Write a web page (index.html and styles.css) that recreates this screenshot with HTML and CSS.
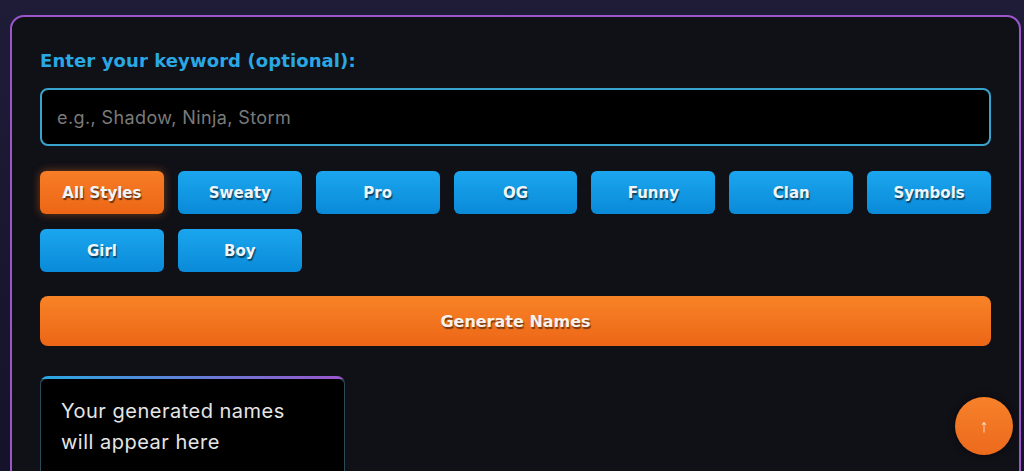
FILE: index.html
```html
<!DOCTYPE html>
<html lang="en">
<head>
  <meta charset="UTF-8">
  <title>Fortnite Name Generator</title>
  <link rel="stylesheet" href="styles.css">
</head>
<body>

  <div class="card">
    <label class="label" for="keyword">Enter your keyword (optional):</label>
    <input type="text" id="keyword" class="keyword" placeholder="e.g., Shadow, Ninja, Storm" />

    <div class="styles">
      <button class="style-btn active">All Styles</button>
      <button class="style-btn">Sweaty</button>
      <button class="style-btn">Pro</button>
      <button class="style-btn">OG</button>
      <button class="style-btn">Funny</button>
      <button class="style-btn">Clan</button>
      <button class="style-btn">Symbols</button>
      <button class="style-btn">Girl</button>
      <button class="style-btn">Boy</button>
    </div>

    <button class="generate">Generate Names</button>

    <div class="results">
      <p>Your generated names will appear here</p>
    </div>
  </div>

  <button class="to-top">&#8593;</button>

</body>
</html>
```
FILE: styles.css
```css
body {
  margin: 0;
  padding: 15px 3px 0 10px;
  background: linear-gradient(180deg, #1f1c38 0%, #151329 100%);
  font-family: Inter, "Noto Sans", sans-serif;
  height: 456px;
  overflow: hidden;
}
.card {
  background: #101017;
  border: 2px solid #9b56cc;
  border-radius: 14px;
  padding: 33px 28px 40px 28px;
  height: 500px;
  box-sizing: border-box;
}
.label {
  display: block;
  color: #2aa8e4;
  font-family: "DejaVu Sans", sans-serif;
  font-weight: bold;
  font-size: 18px;
  line-height: 22px;
  margin-bottom: 16px;
  letter-spacing: 0.1px;
}
.keyword {
  display: block;
  width: 100%;
  box-sizing: border-box;
  height: 58px;
  background: #000;
  border: 2px solid #3aa3cc;
  border-radius: 8px;
  padding: 0 15px;
  font-family: Inter, sans-serif;
  font-size: 18px;
  letter-spacing: 0.4px;
  color: #ddd;
  outline: none;
}
.keyword::placeholder {
  color: #7a7a7a;
}
.styles {
  display: grid;
  grid-template-columns: repeat(7, 1fr);
  column-gap: 14px;
  row-gap: 15px;
  margin-top: 25px;
}
.style-btn {
  height: 43px;
  border: none;
  border-radius: 6px;
  background: linear-gradient(180deg, #1ba6ef 0%, #0a8ad8 100%);
  color: #eef6fb;
  font-family: "DejaVu Sans", sans-serif;
  font-weight: bold;
  font-size: 15px;
  text-shadow: 1px 2px 1px rgba(0,0,0,0.55);
  cursor: pointer;
}
.style-btn.active {
  background: linear-gradient(180deg, #f77d26 0%, #ec6616 100%);
  box-shadow: 0 0 10px rgba(247,120,30,0.45);
}
.generate {
  display: block;
  width: 100%;
  height: 50px;
  margin-top: 24px;
  border: none;
  border-radius: 8px;
  background: linear-gradient(180deg, #f88326 0%, #ec6617 100%);
  color: #f6f1ec;
  font-family: "DejaVu Sans", sans-serif;
  font-weight: bold;
  font-size: 16px;
  text-shadow: 1px 2px 1px rgba(0,0,0,0.5);
  cursor: pointer;
}
.results {
  margin-top: 30px;
  width: 305px;
  box-sizing: border-box;
  height: 120px;
  border: 1px solid transparent;
  border-top-width: 3px;
  border-radius: 8px;
  background:
    linear-gradient(#000, #000) padding-box,
    linear-gradient(90deg, #2aa8e4, #9b56cc) top / 100% 3px no-repeat border-box,
    linear-gradient(#2b4a5a, #2b4a5a) border-box;
  padding: 17px 20px;
}
.results p {
  margin: 0;
  color: #e6e6e6;
  font-family: Inter, sans-serif;
  font-size: 20px;
  letter-spacing: 0.5px;
  line-height: 31px;
  width: 245px;
}
.to-top {
  position: fixed;
  left: 955px;
  top: 397px;
  width: 58px;
  height: 58px;
  border-radius: 50%;
  border: none;
  background: linear-gradient(180deg, #f7812a 0%, #ec6a1c 100%);
  color: #fbe3cc;
  font-size: 18px;
  box-shadow: 0 0 6px rgba(0,0,0,0.6);
}
```
